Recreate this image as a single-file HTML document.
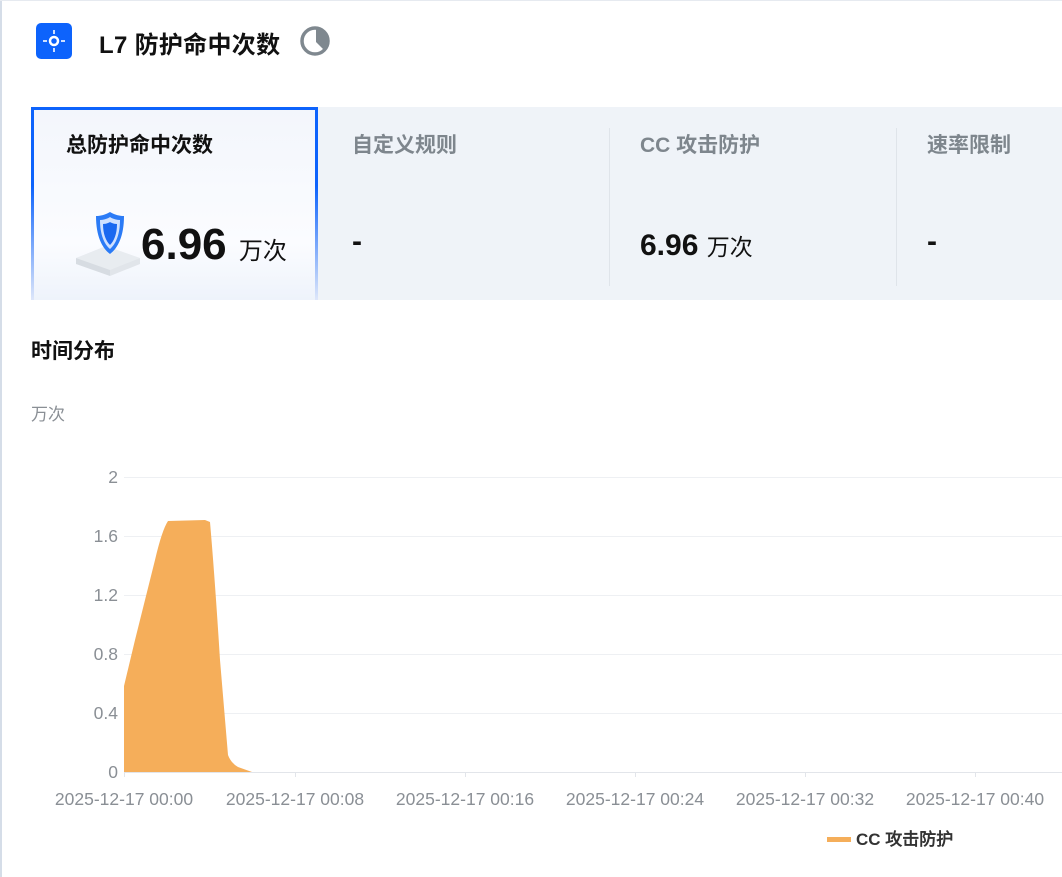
<!DOCTYPE html><html><head><meta charset="utf-8"><style>
body{margin:0;width:1062px;height:877px;overflow:hidden;background:#fff;font-family:"Liberation Sans","Noto Sans CJK SC",sans-serif;position:relative}
.a{position:absolute}
</style></head><body>
<div class="a" style="left:0;top:0;width:2px;height:877px;background:#d5dde8"></div>
<div class="a" style="left:0;top:0;width:1062px;height:1px;background:#e6eaf0"></div>
<div class="a" style="left:36px;top:23px;width:36px;height:36px;border-radius:5px;background:#0d63fc">
<svg width="36" height="36"><circle cx="18" cy="18" r="4" fill="none" stroke="#fff" stroke-width="2.5"/><g stroke="#fff" stroke-width="2" opacity=".8"><path d="M18 7v4M18 25v4M7 18h4M25 18h4"/></g></svg></div>
<div class="a" style="left:99px;top:25px;font-size:24px;font-weight:bold;color:#111;letter-spacing:0.3px">L7 防护命中次数</div>
<svg class="a" style="left:299px;top:25px" width="32" height="32"><circle cx="16" cy="16" r="13" fill="none" stroke="#7f888f" stroke-width="3.5"/><path d="M17 2A14 14 0 0 1 30 17L17 17Z" fill="#7f888f"/><path d="M17 17L30 17A14 14 0 0 1 26 26Z" fill="#7f888f"/></svg>
<div class="a" style="left:31px;top:107px;width:1031px;height:193px;background:#eff3f8"></div>
<div class="a" style="left:31px;top:107px;width:281px;height:190px;border:3px solid #0d63fc;border-bottom:none;background:linear-gradient(#f3f6fc,#fbfcff 70%,#eef3fb);border-image:linear-gradient(#0d63fc,#0d63fc 40%,#e0e8fa) 1"></div>
<div class="a" style="left:66px;top:129px;font-size:21px;font-weight:bold;color:#111">总防护命中次数</div>
<svg class="a" style="left:72px;top:208px" width="70" height="70"><path d="M4 50l30-12 34 12-30 14z" fill="#e8ecf0"/><path d="M4 50v6l34 12v-6z" fill="#d7dce2"/><path d="M38 62v6l30-12v-6z" fill="#e1e5ea"/><path d="M24 8c8 0 14-4 14-4s6 4 14 4c0 20-6 32-14 38-8-6-14-18-14-38z" fill="#2b7bf6"/><path d="M28 12c6 0 10-3 10-3s4 3 10 3c0 14-4 24-10 29-6-5-10-15-10-29z" fill="#cfe0ff"/><path d="M31 16c4 0 7-2 7-2s3 2 7 2c0 10-3 17-7 21-4-4-7-11-7-21z" fill="#1a68f0"/></svg>
<div class="a" style="left:141px;top:220px;font-size:44px;font-weight:bold;color:#111">6.96 <span style="font-size:24px;font-weight:normal">万次</span></div>
<div class="a" style="left:352px;top:129px;font-size:21px;font-weight:bold;color:#7e868d">自定义规则</div>
<div class="a" style="left:352px;top:225px;font-size:30px;font-weight:bold;color:#111">-</div>
<div class="a" style="left:609px;top:128px;width:1px;height:158px;background:#dfe4ea"></div>
<div class="a" style="left:640px;top:129px;font-size:21px;font-weight:bold;color:#7e868d">CC 攻击防护</div>
<div class="a" style="left:640px;top:228px;font-size:30px;font-weight:bold;color:#111">6.96 <span style="font-size:23px;font-weight:normal">万次</span></div>
<div class="a" style="left:896px;top:128px;width:1px;height:158px;background:#dfe4ea"></div>
<div class="a" style="left:927px;top:129px;font-size:21px;font-weight:bold;color:#7e868d">速率限制</div>
<div class="a" style="left:927px;top:225px;font-size:30px;font-weight:bold;color:#111">-</div>
<div class="a" style="left:31px;top:335px;font-size:21px;font-weight:bold;color:#111">时间分布</div>
<div class="a" style="left:31px;top:400px;font-size:17px;color:#8a8f95">万次</div>
<svg class="a" style="left:0;top:460px" width="1062" height="400" font-family="Liberation Sans,sans-serif" font-size="17.5" fill="#8a8f95">
<g stroke="#eef0f3"><path d="M124 17.5H1062M124 76.5H1062M124 135.5H1062M124 194.5H1062M124 253.5H1062"/></g>
<path d="M124 312.5H1062" stroke="#e2e5ea"/>
<g stroke="#e2e5ea"><path d="M124.5 312v5M295.5 312v5M465.5 312v5M635.5 312v5M805.5 312v5M975.5 312v5"/></g>
<path d="M124 226L135 180L155 100Q162 70 168 61L205 60L210 62Q215 120 220 200L228 295Q231 303 238 307L252 312H124Z" fill="#f5ae5a"/>
<g text-anchor="end"><text x="118" y="23">2</text><text x="118" y="82">1.6</text><text x="118" y="141">1.2</text><text x="118" y="200">0.8</text><text x="118" y="259">0.4</text><text x="118" y="318">0</text></g>
<g text-anchor="middle"><text x="124" y="345">2025-12-17 00:00</text><text x="295" y="345">2025-12-17 00:08</text><text x="465" y="345">2025-12-17 00:16</text><text x="635" y="345">2025-12-17 00:24</text><text x="805" y="345">2025-12-17 00:32</text><text x="975" y="345">2025-12-17 00:40</text></g>
<rect x="827" y="377" width="24" height="5" fill="#f5ae5a"/>
<text x="856" y="385" fill="#333" font-weight="bold" font-size="17">CC 攻击防护</text>
</svg>
</body></html>
